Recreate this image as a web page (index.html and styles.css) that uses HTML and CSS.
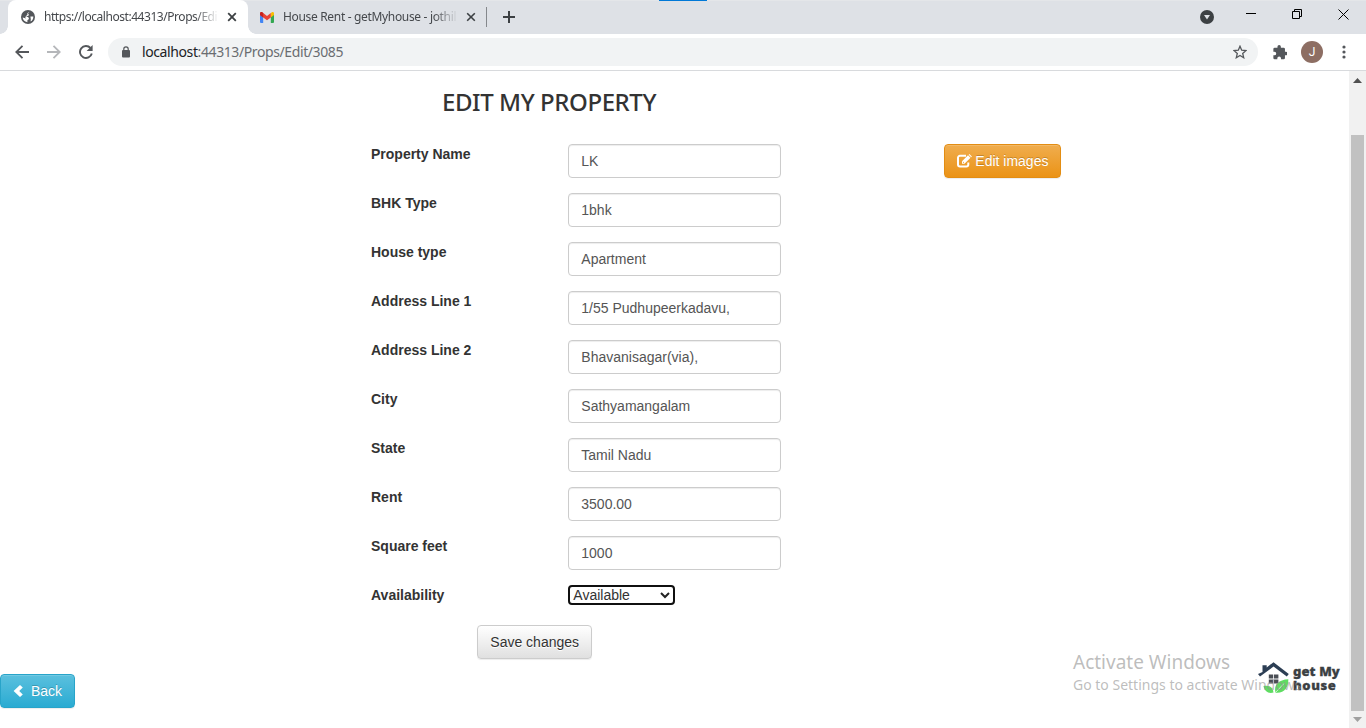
FILE: index.html
```html
<!DOCTYPE html>
<html lang="en">
<head>
<meta charset="utf-8">
<title>Edit my property</title>
<link rel="stylesheet" href="styles.css">
</head>
<body>
<div class="browser">
  <header class="tabstrip">
    <span class="task-accent"></span>
    <div class="tab tab-active">
      <svg class="favicon" width="14" height="14" viewBox="0 0 14 14"><circle cx="7" cy="7" r="7" fill="#54575b"/><path d="M8.500 1.800 6 3.600 8 4.400 7.400 5.800 5 6.200 7.400 7.200 8 9 6.400 10.200 6.400 12.200C3.500 12 1.700 9.800 1.700 7.600L5 8.400 4.200 7.200Z" fill="#fff"/><path d="M9.400 6.600 12.300 6.400C12.500 8.600 11.400 10.500 9.600 11.500L9.800 9.200Z" fill="#fff"/></svg>
      <span class="tab-title tab-title-active">https://localhost:44313/Props/Edi</span>
      <svg class="tab-close" width="10" height="10" viewBox="0 0 10 10"><path d="M1.200 1.200 8.800 8.800M8.800 1.200 1.200 8.800" stroke="#3c4043" stroke-width="1.800"/></svg>
    </div>
    <div class="tab tab-idle">
      <svg class="favicon" width="14" height="11" viewBox="0 0 14 11"><path d="M0 1.500V10a1 1 0 0 0 1 1h2.200V4Z" fill="#4285f4"/><path d="M14 1.500V10a1 1 0 0 1-1 1h-2.200V4Z" fill="#34a853"/><path d="M10.800 1.100 12 .3C12.900-.3 14 .3 14 1.500V3L10.800 5.400Z" fill="#fbbc04"/><path d="M0 3V1.500C0 .3 1.300-.3 2.200.3L7 3.900 10.800 1.100V5.400L7 8.200 3.200 5.400Z" fill="#ea4335"/><path d="M0 1.500C0 .3 1.300-.3 2.200.3L3.200 1.100V5.400L0 3Z" fill="#c5221f"/></svg>
      <span class="tab-title tab-title-idle">House Rent - getMyhouse - jothil</span>
      <svg class="tab-close" width="10" height="10" viewBox="0 0 10 10"><path d="M1.200 1.200 8.800 8.800M8.800 1.200 1.200 8.800" stroke="#3c4043" stroke-width="1.600"/></svg>
    </div>
    <span class="tab-divider"></span>
    <svg class="new-tab" width="12" height="12" viewBox="0 0 12 12"><path d="M6 0V12M0 6H12" stroke="#3c4043" stroke-width="2"/></svg>
    <div class="window-controls">
      <svg class="tab-search" width="14" height="14" viewBox="0 0 14 14"><circle cx="7" cy="7" r="7" fill="#3c4043"/><path d="M4 5h6L7 9.400Z" fill="#dee1e6"/></svg>
      <svg width="10" height="10" viewBox="0 0 10 10"><path d="M0 4.500H10" stroke="#000"/></svg>
      <svg width="10" height="10" viewBox="0 0 10 10"><path d="M.5 2.500H7.500V9.500H.5ZM2.500 2.500V.5H9.500V7.500H7.500" stroke="#000" fill="none"/></svg>
      <svg width="11" height="11" viewBox="0 0 11 11"><path d="M.5.500 10.500 10.500M10.500.5.500 10.500" stroke="#000"/></svg>
    </div>
  </header>

  <nav class="toolbar">
    <svg class="nav-back" width="14" height="14" viewBox="0 0 14 14"><path d="M14 7H1.500M7.500 .8 1.300 7 7.500 13.200" fill="none" stroke="#54575b" stroke-width="1.800"/></svg>
    <svg class="nav-forward" width="14" height="14" viewBox="0 0 14 14"><path d="M0 7H12.500M6.500 .8 12.700 7 6.500 13.200" fill="none" stroke="#b5b7ba" stroke-width="1.800"/></svg>
    <svg class="nav-reload" width="14" height="14" viewBox="0 0 14 14"><path d="M12.800 8.500A6 6 0 1 1 11.500 3" fill="none" stroke="#54575b" stroke-width="1.900"/><path d="M13.600 0V6H7.600Z" fill="#54575b"/></svg>
    <div class="omnibox">
      <svg width="8" height="12" viewBox="0 0 8 12"><path d="M1.800 5V3a2.200 2.200 0 0 1 4.400 0V5" fill="none" stroke="#54575b" stroke-width="1.200"/><rect y="4" width="8" height="7.500" rx="1" fill="#54575b"/></svg>
      <span class="url"><b class="url-host">localhost</b>:44313/Props/Edit/3085</span>
      <svg class="star" width="14" height="14" viewBox="0 0 14 14"><path d="M7 1.200 8.700 5.200 13 5.600 9.700 8.400 10.700 12.700 7 10.400 3.300 12.700 4.300 8.400 1 5.600 5.300 5.200Z" fill="none" stroke="#54575b" stroke-width="1.300"/></svg>
    </div>
    <svg class="extensions" width="15" height="15" viewBox="0 1 22 22"><path d="M20.500 11H19V7a2 2 0 0 0-2-2h-4V3.500a2.500 2.500 0 0 0-5 0V5H4a2 2 0 0 0-2 2v3.800h1.500a2.700 2.700 0 0 1 0 5.400H2V20a2 2 0 0 0 2 2h3.800v-1.500a2.700 2.700 0 0 1 5.400 0V22H17a2 2 0 0 0 2-2v-4h1.500a2.500 2.500 0 0 0 0-5Z" fill="#54575b"/></svg>
    <span class="avatar">J</span>
    <svg class="menu" width="4" height="14" viewBox="0 0 4 14"><g fill="#54575b"><circle cx="2" cy="2" r="1.600"/><circle cx="2" cy="7" r="1.600"/><circle cx="2" cy="12" r="1.600"/></g></svg>
  </nav>

  <div class="viewport">
    <main class="page">
      <h1 class="page-title">EDIT MY PROPERTY</h1>
      <div class="form-layout">
        <form class="property-form">
          <label class="label">Property Name</label><input class="field" value="LK">
          <label class="label">BHK Type</label><input class="field" value="1bhk">
          <label class="label">House type</label><input class="field" value="Apartment">
          <label class="label">Address Line 1</label><input class="field" value="1/55 Pudhupeerkadavu,">
          <label class="label">Address Line 2</label><input class="field" value="Bhavanisagar(via),">
          <label class="label">City</label><input class="field" value="Sathyamangalam">
          <label class="label">State</label><input class="field" value="Tamil Nadu">
          <label class="label">Rent</label><input class="field" value="3500.00">
          <label class="label">Square feet</label><input class="field" value="1000">
          <label class="label">Availability</label>
          <div class="select"><span>Available</span><svg width="10" height="7" viewBox="0 0 10 7"><path d="M1 1 5 5 9 1" fill="none" stroke="#222" stroke-width="2"/></svg></div>
        </form>
        <button class="btn btn-warning"><svg width="15" height="14" viewBox="0 0 15 14"><path d="M9 1.800H3A2 2 0 0 0 1 3.800V10.500A2 2 0 0 0 3 12.500H9.300A2 2 0 0 0 11.300 10.500V8.500" fill="none" stroke="#fff" stroke-width="2"/><path d="M5 9.800V7.300L11 1.300 13.500 3.800 7.500 9.800Z" fill="#fff"/><path d="M11.700.7 12.400 0 14.900 2.500 14.200 3.200Z" fill="#fff"/><path d="M6.100 7.600 7.200 8.700 6.100 9Z" fill="#eb9316"/></svg>Edit images</button>
      </div>
      <button class="btn btn-default">Save changes</button>
      <button class="btn btn-info"><svg width="10" height="12" viewBox="0 0 10 12"><path d="M7 0 9.800 2.600 6.200 6 9.800 9.400 7 12 .6 6Z" fill="#fff"/></svg>Back</button>

      <div class="brand">
        <svg width="31" height="32" viewBox="0 0 31 32"><path d="M4.500 10V3.200H8.700V5.500L15.500.2 30.800 12 28.800 14.400 15.500 4.600 2 14.400 0 12Z" fill="#2c3e54"/><g fill="#4a4e55"><path d="M10.800 12.500h4.400v4h-4.400ZM16 12.500h4.400v4h-4.400ZM10.800 17.500h4.400v4h-4.400ZM16 17.500h4.400v4h-4.400Z"/></g><path d="M5.500 24C11 23 15 25 15.500 30.500 10 32 6.500 29 5.500 24Z" fill="#5fdc62"/><path d="M30.300 17.300C21 17.600 15.300 23 17.500 30.700 26 31.700 30.800 25.500 30.300 17.300Z" fill="#5fdc62"/><path d="M17.500 30.500 26 21.500" stroke="#e2fae3" stroke-width=".8" fill="none"/></svg>
        <span class="brand-name">get My<br><span class="brand-second">house</span></span>
      </div>
      <div class="watermark"><span class="watermark-title">Activate Windows</span><span class="watermark-text">Go to Settings to activate Windows.</span></div>
    </main>
    <aside class="scrollbar">
      <svg width="9" height="5" viewBox="0 0 9 5"><path d="M0 5H9L4.500 0Z" fill="#505050"/></svg>
      <span class="thumb"></span>
      <svg width="9" height="5" viewBox="0 0 9 5"><path d="M0 0H9L4.500 5Z" fill="#a0a0a0"/></svg>
    </aside>
  </div>
</div>
</body>
</html>
```
FILE: styles.css
```css
* { box-sizing: border-box; }
body { margin: 0; background: #fff; overflow: hidden; }
svg { display: block; flex: none; }

.browser { width: 1366px; height: 728px; display: flex; flex-direction: column; }

.tabstrip { position: relative; height: 34px; flex: none; display: flex; align-items: center; background: #dee1e6; border-top: 1px solid #e4e6e9; padding-left: 8px; }
.task-accent { position: absolute; top: -1px; left: 659px; width: 48px; height: 1px; background: #0078d7; }
.tab { height: 34px; display: flex; align-items: center; font: 12px/16px "Noto Sans", sans-serif; color: #45484c; }
.tab-active { position: relative; margin-top: -1px; width: 240px; background: #fff; border-radius: 8px 8px 0 0; padding: 0 11px 0 13px; }
.tab-active::before, .tab-active::after { content: ""; position: absolute; bottom: 0; width: 8px; height: 8px; }
.tab-active::before { left: -8px; background: radial-gradient(circle at 0 0, #dee1e6 7.500px, #fff 8px); }
.tab-active::after { right: -8px; background: radial-gradient(circle at 100% 0, #dee1e6 7.500px, #fff 8px); }
.tab-idle { width: 239px; margin-right: -1px; margin-top: -1px; padding: 0 11px 0 12px; }
.favicon { margin-right: 9px; }
.tab-title { overflow: hidden; white-space: nowrap; flex: 1; margin-right: 8px; -webkit-mask-image: linear-gradient(90deg, #000 86%, transparent); mask-image: linear-gradient(90deg, #000 86%, transparent); }
.tab-title-active { letter-spacing: -.45px; }
.tab-title-idle { letter-spacing: -.33px; }
.tab-divider { width: 1px; height: 20px; margin-bottom: 1px; background: #85888c; }
.new-tab { margin: 0 0 1px 16px; }
.window-controls { margin-left: auto; padding-right: 17px; display: flex; align-items: center; gap: 36px; height: 27px; margin-bottom: 7px; }
.tab-search { margin-top: 6px; margin-right: -4px; }

.toolbar { height: 37px; flex: none; display: flex; align-items: center; background: #fff; border-bottom: 1px solid #d8dadd; padding: 0 20px 0 15px; }
.nav-forward { margin-left: 18px; }
.nav-reload { margin-left: 18px; }
.omnibox { height: 28px; width: 1150px; margin-left: 15px; border-radius: 14px; background: #f1f3f4; display: flex; align-items: center; padding: 0 11px 0 14px; }
.url { margin-left: 12px; font: 14px/20px "Noto Sans", sans-serif; letter-spacing: -.4px; color: #6a6d71; }
.url-host { font-weight: 400; color: #202124; }
.star { margin-left: auto; }
.extensions { margin-left: 14px; }
.avatar { width: 22px; height: 22px; margin-left: 14px; border-radius: 50%; background: #8d6e63; color: #fff; font: 12px/22px Roboto, sans-serif; text-align: center; }
.menu { margin-left: auto; }

.viewport { flex: 1; display: flex; min-height: 0; }
.page { position: relative; flex: 1; font: 14px/20px "Liberation Sans", Arial, sans-serif; color: #333; }
.page-title { margin: 14px 0 26px 442px; font: 500 24px/33px "Noto Sans", sans-serif; letter-spacing: -.42px; white-space: nowrap; }
.form-layout { display: flex; align-items: flex-start; margin-left: 371px; }
.property-form { display: grid; grid-template-columns: 197px 213px; row-gap: 15px; }
.label { font-weight: 700; }
.field { width: 213px; height: 34px; margin: 0; padding: 6px 12px 6px 12.300px; border: 1px solid #ccc; border-radius: 4px; box-shadow: inset 0 1px 1px rgba(0,0,0,.075); font: 14px/20px "Liberation Sans", Arial, sans-serif; color: #555; }
.select { width: 107px; height: 20px; display: flex; align-items: center; justify-content: space-between; padding: 0 3px 0 3.300px; border: 2px solid #101010; border-radius: 4px; }
.btn { height: 34px; display: flex; align-items: center; border: 1px solid; border-radius: 4px; padding: 0 12px; font: 14px/20px "Liberation Sans", Arial, sans-serif; white-space: nowrap; box-shadow: inset 0 1px 0 rgba(255,255,255,.15), 0 1px 1px rgba(0,0,0,.075); }
.btn-warning { width: 117px; margin-left: 163px; gap: 3.300px; color: #fff; border-color: #e38d13; background: linear-gradient(#f0ad4e, #eb9316); text-shadow: 0 -1px 0 rgba(0,0,0,.2); }
.btn-default { width: 115px; margin: 20px 0 15px 477px; padding-left: 12.300px; color: #333; border-color: #ccc; background: linear-gradient(#fff, #e0e0e0); text-shadow: 0 1px 0 #fff; }
.btn-info { width: 75px; gap: 8px; color: #fff; border-color: #28a4c9; background: linear-gradient(#5bc0de, #2aabd2); text-shadow: 0 -1px 0 rgba(0,0,0,.2); }

.brand { position: absolute; left: 1258px; top: 591px; display: flex; }
.brand-name { margin: 2px 0 0 4px; font: 900 13px/14px "Noto Sans", sans-serif; letter-spacing: .1px; -webkit-text-stroke: .3px #3b4043; color: #3b4043; white-space: nowrap; }
.brand-second { letter-spacing: .6px; }
.watermark { position: absolute; left: 1073px; top: 579px; display: flex; flex-direction: column; font-family: "Noto Sans", sans-serif; color: rgba(145,145,145,.6); white-space: nowrap; }
.watermark-title { font-size: 19px; line-height: 25px; }
.watermark-text { font-size: 14px; line-height: 20px; }

.scrollbar { width: 17px; display: flex; flex-direction: column; align-items: center; background: #f1f1f1; padding: 7px 0 6px; }
.thumb { width: 13px; height: 576px; margin: 52px 0 auto; background: #c1c1c1; }
```
